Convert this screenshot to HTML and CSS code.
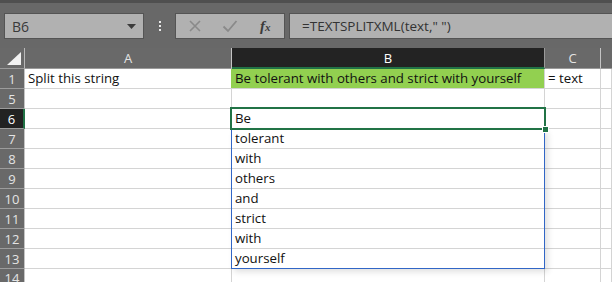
FILE: index.html
```html
<!DOCTYPE html>
<html lang="en">
<head>
  <meta charset="UTF-8" />
  <title>TEXTSPLITXML</title>
  <link rel="stylesheet" href="styles.css">
</head>
<body>

  <div class="app">
    <div class="topline"></div>

    <!-- Formula bar -->
    <div class="formulabar">
      <div class="namebox">
        <span>B6</span>
        <svg class="arrow" width="9" height="5" viewBox="0 0 9 5"><path d="M0 0h9L4.5 5z" fill="#3c3c3c"/></svg>
      </div>
      <div class="grip"><i></i><i></i><i></i></div>
      <div class="fbuttons">
        <svg width="14" height="14" viewBox="0 0 14 14"><path d="M2 2l10 10M12 2L2 12" stroke="#8a8a8a" stroke-width="1.6" fill="none"/></svg>
        <svg width="16" height="14" viewBox="0 0 16 14"><path d="M1.5 7.5l4.5 4.5L14.5 2" stroke="#8a8a8a" stroke-width="1.8" fill="none"/></svg>
        <span class="fx">f<small>x</small></span>
      </div>
      <div class="formula">=TEXTSPLITXML(text," ")</div>
    </div>

    <!-- Sheet -->
    <div class="sheet">
      <div class="corner"><span class="tri"></span></div>
      <div class="colhdr">A</div>
      <div class="colhdr sel">B</div>
      <div class="colhdr">C</div>
      <div class="colhdr last"></div>

      <div class="rowhdr">1</div>
      <div class="cell">Split this string</div>
      <div class="cell green">Be tolerant with others and strict with yourself</div>
      <div class="cell">= text</div>
      <div class="cell"></div>

      <div class="rowhdr">5</div>
      <div class="cell"></div><div class="cell"></div><div class="cell"></div><div class="cell"></div>

      <div class="rowhdr sel">6</div>
      <div class="cell"></div><div class="cell">Be</div><div class="cell"></div><div class="cell"></div>

      <div class="rowhdr">7</div>
      <div class="cell"></div><div class="cell">tolerant</div><div class="cell"></div><div class="cell"></div>

      <div class="rowhdr">8</div>
      <div class="cell"></div><div class="cell">with</div><div class="cell"></div><div class="cell"></div>

      <div class="rowhdr">9</div>
      <div class="cell"></div><div class="cell">others</div><div class="cell"></div><div class="cell"></div>

      <div class="rowhdr">10</div>
      <div class="cell"></div><div class="cell">and</div><div class="cell"></div><div class="cell"></div>

      <div class="rowhdr">11</div>
      <div class="cell"></div><div class="cell">strict</div><div class="cell"></div><div class="cell"></div>

      <div class="rowhdr">12</div>
      <div class="cell"></div><div class="cell">with</div><div class="cell"></div><div class="cell"></div>

      <div class="rowhdr">13</div>
      <div class="cell"></div><div class="cell">yourself</div><div class="cell"></div><div class="cell"></div>

      <div class="rowhdr">14</div>
      <div class="cell"></div><div class="cell"></div><div class="cell"></div><div class="cell"></div>

      <!-- spill range + active cell drawn over the grid -->
      <div class="spill"></div>
      <div class="active"><span class="handle"></span></div>
    </div>
  </div>

</body>
</html>
```

FILE: styles.css
```css
body {
  margin: 0;
  background: #686868;
  font-family: "Open Sans", "Noto Sans", sans-serif;
  overflow: hidden;
}

.app {
  width: 612px;
  height: 282px;
  overflow: hidden;
}

.topline {
  height: 3px;
  background: #4f4f4f;
}

/* formula bar */
.formulabar {
  display: flex;
  align-items: center;
  height: 26px;
  margin-top: 10px;
  margin-bottom: 9px;
  padding-left: 4px;
}

.namebox {
  box-sizing: border-box;
  width: 140px;
  height: 26px;
  background: #b1b1b1;
  border: 1px solid #545454;
  display: flex;
  align-items: center;
  justify-content: space-between;
  padding: 0 7px 0 7px;
  color: #3a3a3a;
  font-size: 14px;
}

.grip {
  width: 31px;
  display: flex;
  flex-direction: column;
  align-items: center;
  gap: 2px;
}

.grip i {
  width: 2px;
  height: 2px;
  background: #e8e8e8;
}

.fbuttons {
  box-sizing: border-box;
  width: 110px;
  height: 26px;
  background: #b1b1b1;
  border: 1px solid #545454;
  display: flex;
  align-items: center;
  padding-left: 12px;
  gap: 20px;
}

.fx {
  font-family: "Liberation Serif", serif;
  font-style: italic;
  font-weight: bold;
  font-size: 15px;
  color: #3a3a3a;
  margin-left: 2px;
}

.fx small {
  font-size: 11px;
}

.formula {
  box-sizing: border-box;
  flex: 1;
  height: 26px;
  margin-left: 4px;
  background: #b1b1b1;
  border: 1px solid #545454;
  border-right: none;
  padding-left: 12px;
  line-height: 24px;
  font-size: 13.5px;
  color: #333;
}

/* grid */
.sheet {
  position: relative;
  display: grid;
  grid-template-columns: 25px 207px 313px 56px 1fr;
  grid-template-rows: 21px repeat(10, 20px);
  background: #fff;
}

.corner, .colhdr, .rowhdr {
  box-sizing: border-box;
  background: #696969;
  color: #e4e4e4;
  font-size: 13px;
  display: flex;
  align-items: center;
  justify-content: center;
}

.corner {
  position: relative;
  border-right: 1px solid #b8b8b8;
  border-bottom: 1px solid #9a9a9a;
}

.tri {
  position: absolute;
  right: 3px;
  bottom: 3px;
  width: 0;
  height: 0;
  border-left: 14px solid transparent;
  border-bottom: 13px solid #f2f2f2;
}

.colhdr {
  border-right: 1px solid #c4c4c4;
  border-bottom: 1px solid #9a9a9a;
}

.colhdr.sel {
  background: #232323;
  color: #fff;
  border-right-color: #9a9a9a;
  border-bottom: 2px solid #217346;
}

.colhdr.last {
  border-right: none;
}

.rowhdr {
  border-right: 1px solid #c4c4c4;
  border-bottom: 1px solid #9c9c9c;
  font-size: 13px;
}

.rowhdr.sel {
  background: #222;
  color: #fff;
  border-right: 2px solid #217346;
}

.cell {
  box-sizing: border-box;
  border-right: 1px solid #d4d4d4;
  border-bottom: 1px solid #d4d4d4;
  padding-left: 3px;
  font-size: 13.25px;
  line-height: 19px;
  color: #111;
  white-space: nowrap;
}

.cell.green {
  background: #92d050;
  margin-left: -1px;
  padding-left: 4px;
}

.spill {
  position: absolute;
  left: 231px;
  top: 81px;
  width: 314px;
  height: 140px;
  box-sizing: border-box;
  border: 1px solid #3166c6;
  border-top: none;
  box-shadow: 3px 3px 6px rgba(0, 0, 0, 0.12);
}

.active {
  position: absolute;
  left: 230px;
  top: 59px;
  width: 316px;
  height: 23px;
  box-sizing: border-box;
  border: 2px solid #217346;
}

.handle {
  position: absolute;
  right: -5px;
  bottom: -5px;
  width: 5px;
  height: 5px;
  background: #217346;
  border: 1px solid #fff;
}
```
